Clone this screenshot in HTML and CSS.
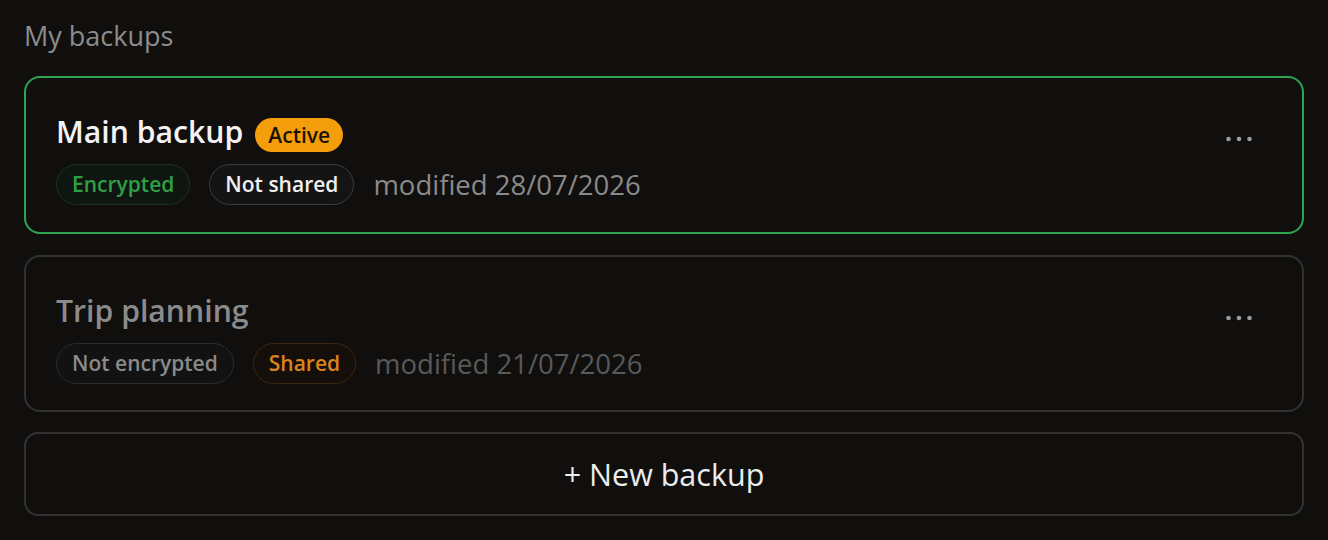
FILE: index.html
```html
<!DOCTYPE html>
<html lang="en">
<head>
<meta charset="utf-8">
<title>My backups</title>
<link rel="stylesheet" href="styles.css">
</head>
<body>
<main class="page">
  <h2 class="heading">My backups</h2>
  <ul class="list">
    <li class="card card-active">
      <div class="card-body">
        <div class="title-row">
          <span class="title">Main backup</span>
          <span class="badge">Active</span>
        </div>
        <div class="meta-row">
          <span class="chip chip-green">Encrypted</span>
          <span class="chip chip-plain">Not shared</span>
          <span class="modified">modified 28/07/2026</span>
        </div>
      </div>
      <button class="more" aria-label="More options">
        <svg width="26" height="6" viewBox="0 0 26 6"><circle cx="2.5" cy="3" r="2.3"/><circle cx="13" cy="3" r="2.3"/><circle cx="23.5" cy="3" r="2.3"/></svg>
      </button>
    </li>
    <li class="card card-muted">
      <div class="card-body">
        <div class="title-row">
          <span class="title">Trip planning</span>
        </div>
        <div class="meta-row">
          <span class="chip chip-dim">Not encrypted</span>
          <span class="chip chip-orange">Shared</span>
          <span class="modified">modified 21/07/2026</span>
        </div>
      </div>
      <button class="more" aria-label="More options">
        <svg width="26" height="6" viewBox="0 0 26 6"><circle cx="2.5" cy="3" r="2.3"/><circle cx="13" cy="3" r="2.3"/><circle cx="23.5" cy="3" r="2.3"/></svg>
      </button>
    </li>
  </ul>
  <button class="new-btn">+ New backup</button>
</main>
</body>
</html>
```
FILE: styles.css
```css
* { box-sizing: border-box; }
html, body {
  margin: 0;
  padding: 0;
  background: #100f0e;
}
body {
  font-family: "Open Sans", "Noto Sans", sans-serif;
  color: #ececec;
}
.page {
  padding: 18px 24px 24px;
  display: flex;
  flex-direction: column;
}
.heading {
  margin: 0 0 22px;
  font-size: 27px;
  line-height: 36px;
  font-weight: 400;
  color: #8c8c8c;
}
.list {
  list-style: none;
  margin: 0;
  padding: 0;
  display: flex;
  flex-direction: column;
  gap: 21px;
}
.card {
  display: flex;
  align-items: flex-start;
  border: 2px solid #333231;
  border-radius: 16px;
  padding: 34px 30px 25px 30px;
  height: 158px;
}
.card-active {
  border-color: #2ea44f;
}
.card-muted {
  height: 157px;
}
.card-body {
  flex: 1;
  display: flex;
  flex-direction: column;
  gap: 12px;
}
.title-row {
  display: flex;
  align-items: baseline;
  gap: 12px;
}
.title {
  font-size: 30.2px;
  line-height: 40px;
  font-weight: 600;
  color: #f3f3f3;
}
.card-muted .title {
  color: #8b8b8b;
}
.badge {
  font-size: 21px;
  line-height: 34px;
  font-weight: 600;
  padding: 0 13px;
  border-radius: 17px;
  background: #f59e0b;
  color: #1a1305;
}
.meta-row {
  display: flex;
  align-items: center;
  gap: 19px;
}
.chip {
  font-size: 21px;
  line-height: 39px;
  font-weight: 600;
  padding: 0 15px;
  border: 1px solid #3a3a3a;
  border-radius: 21px;
}
.chip-green {
  color: #2ea043;
  border-color: #1b3322;
  background: #0f1611;
}
.chip-plain {
  color: #f0f0f0;
  border-color: #3d3d3d;
  background: #141414;
}
.chip-dim {
  color: #8a8a8a;
  border-color: #2c2c2c;
  background: #121212;
}
.chip-orange {
  color: #dc831c;
  border-color: #3a2711;
  background: #140f0a;
}
.modified {
  font-size: 27.5px;
  line-height: 36px;
  color: #8a8a8a;
}
.card-muted .modified {
  color: #595959;
}
.more {
  margin-top: 8px;
  padding: 16px 20px;
  border: 0;
  background: transparent;
  display: flex;
  cursor: pointer;
}
.more svg {
  display: block;
  fill: #9b9b9b;
}
.new-btn {
  margin-top: 20px;
  height: 84px;
  border: 2px solid #333231;
  border-radius: 14px;
  background: transparent;
  font-family: "Open Sans", "Noto Sans", sans-serif;
  font-size: 30.5px;
  color: #ececec;
  cursor: pointer;
}
```
